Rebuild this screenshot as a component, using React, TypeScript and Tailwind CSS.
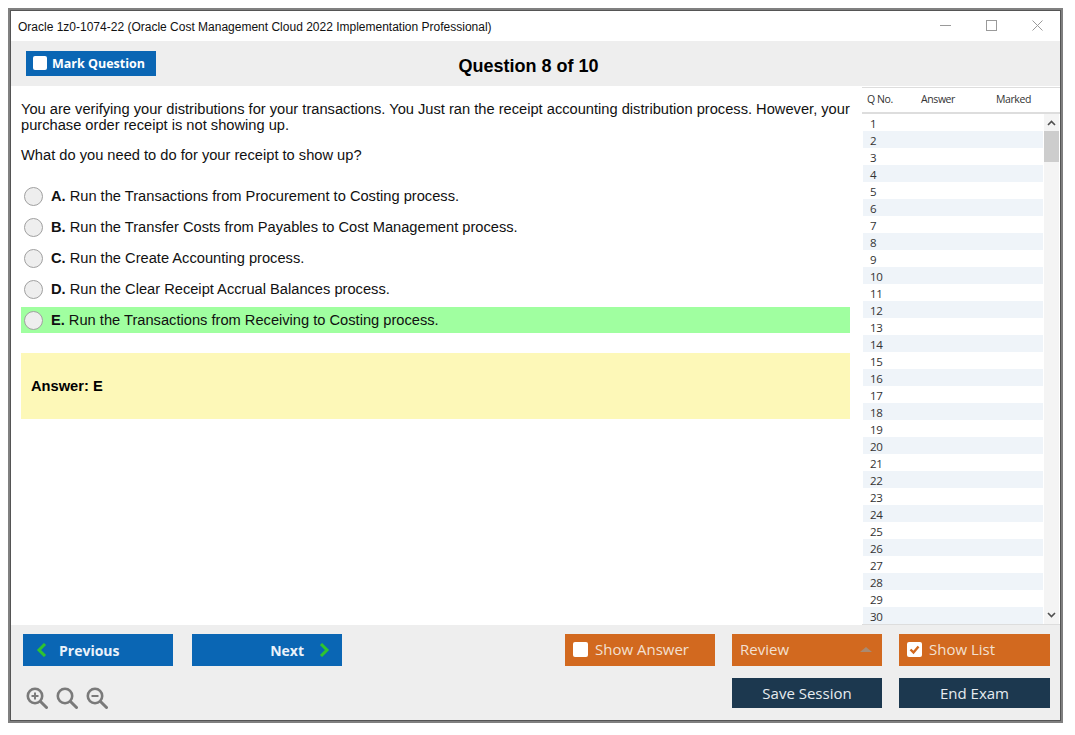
import React from 'react';

const options = [
  { key: 'A.', text: 'Run the Transactions from Procurement to Costing process.' },
  { key: 'B.', text: 'Run the Transfer Costs from Payables to Cost Management process.' },
  { key: 'C.', text: 'Run the Create Accounting process.' },
  { key: 'D.', text: 'Run the Clear Receipt Accrual Balances process.' },
  { key: 'E.', text: 'Run the Transactions from Receiving to Costing process.', correct: true },
];

const rows = Array.from({ length: 30 }, (_, i) => i + 1);

function ZoomIcon({ sign }: { sign: 'plus' | 'minus' | 'none' }) {
  return (
    <svg className="w-[22px] h-[22px]" viewBox="0 0 22 22" fill="none" stroke="#7a7a7a" strokeWidth={2.6}>
      <circle cx="9" cy="9" r="7.2" />
      <path d="M14.5 14.5L20.5 20.5" strokeLinecap="round" strokeWidth={3} />
      {sign !== 'none' && <path d="M5.5 9h7" strokeWidth={2} />}
      {sign === 'plus' && <path d="M9 5.5v7" strokeWidth={2} />}
    </svg>
  );
}

function Chevron({ dir }: { dir: 'left' | 'right' }) {
  return (
    <svg className="w-[11px] h-[14px]" viewBox="0 0 11 14" fill="none" stroke="#2fc42f" strokeWidth={3}>
      <path d={dir === 'left' ? 'M9 1L3 7l6 6' : 'M2 1l6 6-6 6'} />
    </svg>
  );
}

function Check({ checked }: { checked?: boolean }) {
  return (
    <span className="w-[15px] h-[15px] bg-white rounded-[2px] flex items-center justify-center shrink-0">
      {checked && (
        <svg className="w-[11px] h-[11px]" viewBox="0 0 11 11" fill="none" stroke="#d2691f" strokeWidth={2.4}>
          <path d="M1.5 5.5l3 3 5-6" />
        </svg>
      )}
    </span>
  );
}

export default function App() {
  return (
    <div className="w-[1075px] h-[735px] bg-white pt-[8px] pl-[8px] font-['Liberation_Sans',Arial,sans-serif] overflow-hidden">
      <div className="w-[1055px] h-[715px] border-[3px] border-[#808080] outline-1 outline-[#555] -outline-offset-[3px] flex flex-col bg-white">
        {/* Title bar */}
        <div className="h-[30px] shrink-0 flex items-center justify-between pl-[7px] pr-[17px] pt-[1px] text-[12px] text-[#111]">
          <span>Oracle 1z0-1074-22 (Oracle Cost Management Cloud 2022 Implementation Professional)</span>
          <div className="flex items-center gap-[35px] mb-[3px]">
            <svg className="w-[11px] h-[11px]" viewBox="0 0 11 11" stroke="#9a9a9a" fill="none">
              <path d="M0 5.5h11" />
            </svg>
            <svg className="w-[11px] h-[11px]" viewBox="0 0 11 11" stroke="#9a9a9a" fill="none">
              <rect x="0.5" y="0.5" width="10" height="10" />
            </svg>
            <svg className="w-[11px] h-[11px]" viewBox="0 0 11 11" stroke="#9a9a9a" fill="none">
              <path d="M0.5 0.5l10 10M10.5 0.5l-10 10" />
            </svg>
          </div>
        </div>

        {/* Toolbar */}
        <div className="h-[45px] shrink-0 bg-[#eeeeee] relative flex items-center pl-[15px] pb-[1px]">
          <button className="w-[130px] h-[25px] bg-[#0a66b4] text-white flex items-center pl-[7px] gap-[5px] font-['Open_Sans',sans-serif] font-bold text-[12.5px]">
            <span className="w-[14px] h-[14px] bg-white rounded-[2px]" />
            <span className="mt-[3px]">Mark Question</span>
          </button>
          <div className="absolute left-0 right-[14px] top-[14px] text-center text-[18px] leading-[22px] font-bold text-black">
            Question 8 of 10
          </div>
        </div>

        {/* Main */}
        <div className="flex-1 min-h-0 flex">
          <div className="w-[851px] shrink-0 pl-[10px] pr-[11px] pt-[15px] text-[14.67px] text-[#111]">
            <p className="leading-[16px]">
              You are verifying your distributions for your transactions. You Just ran the receipt accounting distribution process. However, your purchase order receipt is not showing up.
            </p>
            <p className="leading-[16px] mt-[14px]">What do you need to do for your receipt to show up?</p>
            <div className="mt-[20px] mr-[1px] flex flex-col gap-[5px]">
              {options.map((o) => (
                <div key={o.key} className={`h-[26px] flex items-center pl-[3px] ${o.correct ? 'bg-[#a0ffa0]' : ''}`}>
                  <span className="w-[19px] h-[19px] rounded-full bg-[#eeeeee] border border-[#a0a0a0] shrink-0" />
                  <span className="font-bold ml-[8px]">{o.key}</span>
                  <span className="ml-[4px]">{o.text}</span>
                </div>
              ))}
            </div>
            <div className="mt-[20px] mr-[1px] h-[66px] bg-[#fdf8b8] flex items-center pl-[10px] font-bold text-black">
              Answer: E
            </div>
          </div>

          {/* Question list */}
          <div className="w-[198px] shrink-0 flex flex-col font-['Open_Sans',sans-serif] text-[10.5px] text-[#333] overflow-hidden">
            <div className="h-[27px] mt-[1px] shrink-0 border-t border-[#dddddd] border-b-2 flex items-center pl-[5px] tracking-[-0.4px]">
              <span className="w-[54px]">Q No.</span>
              <span className="w-[75px]">Answer</span>
              <span>Marked</span>
            </div>
            <div className="flex-1 min-h-0 flex border-b border-[#dddddd]">
              <div className="w-[181px] shrink-0 pl-[1px]">
                {rows.map((n) => (
                  <div key={n} className={`h-[17px] leading-[19px] pl-[7px] text-[11.5px] tracking-[-0.3px] ${n % 2 === 0 ? 'bg-[#eff4f9]' : 'bg-white'}`}>
                    {n}
                  </div>
                ))}
              </div>
              <div className="w-[15px] shrink-0 ml-[1px] bg-[#f4f4f4] flex flex-col items-center justify-between relative">
                <svg className="w-[9px] h-[6px] mt-[6px]" viewBox="0 0 9 6" fill="none" stroke="#505050" strokeWidth={1.6}>
                  <path d="M1 5l3.5-3.5L8 5" />
                </svg>
                <div className="absolute top-[17px] left-0 right-0 h-[31px] bg-[#cdcdcd]" />
                <svg className="w-[9px] h-[6px] mb-[6px]" viewBox="0 0 9 6" fill="none" stroke="#505050" strokeWidth={1.6}>
                  <path d="M1 1l3.5 3.5L8 1" />
                </svg>
              </div>
            </div>
          </div>
        </div>

        {/* Footer */}
        <div className="h-[95px] shrink-0 bg-[#eeeeee] flex justify-between pl-[12px] pr-[10px] pt-[9px] font-['Open_Sans',sans-serif] text-[15px]">
          <div className="flex flex-col justify-between pb-[11px]">
            <div className="flex gap-[19px] text-[14px]">
              <button className="w-[150px] h-[32px] bg-[#0a66b4] text-[#eaf2fa] font-bold flex items-center pl-[13px] gap-[12px]">
                <Chevron dir="left" />
                Previous
              </button>
              <button className="w-[150px] h-[32px] bg-[#0a66b4] text-[#eaf2fa] font-bold flex items-center justify-end pr-[12px] gap-[15px]">
                Next
                <Chevron dir="right" />
              </button>
            </div>
            <div className="flex gap-[8px] pl-[3px]">
              <ZoomIcon sign="plus" />
              <ZoomIcon sign="none" />
              <ZoomIcon sign="minus" />
            </div>
          </div>
          <div className="flex flex-col gap-[12px] items-end">
            <div className="flex gap-[17px] text-[#f3e0d2] leading-[20px]">
              <button className="w-[150px] h-[32px] bg-[#d2691f] flex items-center pl-[8px] gap-[7px] pb-[2px]">
                <Check />
                Show Answer
              </button>
              <button className="w-[150px] h-[32px] bg-[#d2691f] flex items-center justify-between pl-[8px] pr-[10px] pb-[2px]">
                Review
                <span className="w-0 h-0 border-l-[6px] border-r-[6px] border-b-[5px] border-l-transparent border-r-transparent border-b-[#a98a72]" />
              </button>
              <button className="w-[151px] h-[32px] bg-[#d2691f] flex items-center pl-[8px] gap-[7px] pb-[2px]">
                <Check checked />
                Show List
              </button>
            </div>
            <div className="flex gap-[17px] text-[#e6ebef]">
              <button className="w-[150px] h-[30px] bg-[#1c384f]">Save Session</button>
              <button className="w-[151px] h-[30px] bg-[#1c384f]">End Exam</button>
            </div>
          </div>
        </div>
      </div>
    </div>
  );
}
